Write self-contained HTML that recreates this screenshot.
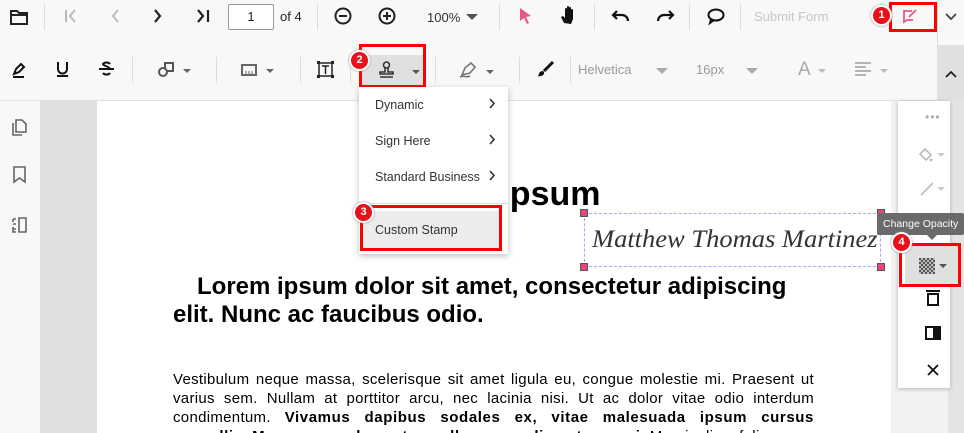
<!DOCTYPE html>
<html><head><meta charset="utf-8"><style>
*{box-sizing:border-box;margin:0;padding:0}
html,body{width:964px;height:433px;overflow:hidden}
body{position:relative;background:#f8f8f8;font-family:"Liberation Sans",sans-serif}
.a{position:absolute}
.sep{position:absolute;width:1px;background:#dcdcdc}
svg{position:absolute;overflow:visible}
.badge{position:absolute;width:21px;height:21px;border-radius:50%;background:#e8101a;border:2px solid #fff;box-shadow:0 0 2px #888;color:#fff;font:bold 11px "Liberation Sans",sans-serif;text-align:center;line-height:17px}
.red{position:absolute;border:3px solid #f00}
.mi{position:absolute;left:375px;font:12.5px "Liberation Sans",sans-serif;color:#333}
</style></head><body>
<!-- toolbar row1 -->
<svg style="left:10px;top:9px" width="18" height="16"><path d="M1 2h6l2 2h8v11H1z" fill="none" stroke="#222" stroke-width="2"/><path d="M1 6h16" stroke="#222" stroke-width="2"/></svg>
<div class="sep" style="left:44px;top:4px;height:26px"></div>
<svg style="left:64px;top:9px" width="14" height="14"><path d="M2 1v12M11 1L6 7l5 6" fill="none" stroke="#bbb" stroke-width="2"/></svg>
<svg style="left:110px;top:9px" width="10" height="14"><path d="M8 1L3 7l5 6" fill="none" stroke="#bbb" stroke-width="2"/></svg>
<svg style="left:153px;top:9px" width="10" height="14"><path d="M2 1l5 6-5 6" fill="none" stroke="#222" stroke-width="2.2"/></svg>
<svg style="left:196px;top:9px" width="14" height="14"><path d="M2 1l5 6-5 6M12 1v12" fill="none" stroke="#222" stroke-width="2.2"/></svg>
<div class="a" style="left:228px;top:4px;width:46px;height:26px;border:1px solid #999;border-radius:2px;background:#fff;font-size:13px;text-align:center;line-height:24px;color:#222">1</div>
<div class="a" style="left:280px;top:9px;font-size:13px;color:#222">of 4</div>
<div class="sep" style="left:317px;top:4px;height:26px"></div>
<svg style="left:334px;top:7px" width="18" height="18"><circle cx="9" cy="9" r="7.5" fill="none" stroke="#222" stroke-width="2"/><path d="M5 9h8" stroke="#222" stroke-width="2"/></svg>
<svg style="left:378px;top:7px" width="18" height="18"><circle cx="9" cy="9" r="7.5" fill="none" stroke="#222" stroke-width="2"/><path d="M5 9h8M9 5v8" stroke="#222" stroke-width="2"/></svg>
<div class="a" style="left:427px;top:10px;font-size:13px;color:#333">100%</div>
<svg style="left:466px;top:14px" width="12" height="7"><path d="M0 0h12L6 6z" fill="#555"/></svg>
<div class="sep" style="left:499px;top:4px;height:26px"></div>
<svg style="left:519px;top:7px" width="14" height="18"><path d="M1 1l11 8-5 1 3 6-2 1-3-6-4 3z" fill="#e9578a"/></svg>
<svg style="left:561px;top:6px" width="16" height="19"><path d="M3 17l-3-6 2-1 2 2V3a1 1 0 012 0v6V1a1 1 0 012 0v8V2a1 1 0 012 0v7V4a1 1 0 012 0v9l-2 5z" fill="#111"/></svg>
<div class="sep" style="left:594px;top:4px;height:26px"></div>
<svg style="left:612px;top:10px" width="18" height="12"><path d="M5 1L1 5l4 4M1 5h9a6 6 0 016 6" fill="none" stroke="#111" stroke-width="2.2"/></svg>
<svg style="left:656px;top:10px" width="18" height="12"><path d="M13 1l4 4-4 4M17 5H8a6 6 0 00-6 6" fill="none" stroke="#111" stroke-width="2.2"/></svg>
<div class="sep" style="left:689px;top:4px;height:26px"></div>
<svg style="left:707px;top:8px" width="18" height="16"><ellipse cx="9" cy="7" rx="7.5" ry="5.5" fill="none" stroke="#111" stroke-width="2"/><path d="M4 11l-1 4 4-3" fill="none" stroke="#111" stroke-width="2"/></svg>
<div class="sep" style="left:740px;top:4px;height:26px"></div>
<div class="a" style="left:754px;top:9px;font-size:13px;color:#c6c6c6">Submit Form</div>
<div class="red" style="left:889px;top:2px;width:48px;height:30px"></div>
<div class="badge" style="left:871px;top:5px">1</div>
<svg style="left:903px;top:9px" width="15" height="14"><path d="M9 2H1v11l3-2h6M6 8l7-7" fill="none" stroke="#e9578a" stroke-width="1.8"/></svg>
<div class="sep" style="left:937px;top:0;height:45px"></div>
<svg style="left:945px;top:13px" width="12" height="8"><path d="M1 1l5 5 5-5" fill="none" stroke="#444" stroke-width="1.8"/></svg>
<!-- toolbar row2 -->
<svg style="left:11px;top:62px" width="14" height="16"><path d="M2 15h11M3 12l2-5 5-5 3 3-5 5z" fill="none" stroke="#111" stroke-width="2"/></svg>
<svg style="left:56px;top:61px" width="13" height="16"><path d="M2 1v7a4.5 4.5 0 009 0V1M1 15h11" fill="none" stroke="#111" stroke-width="2"/></svg>
<svg style="left:99px;top:61px" width="15" height="16"><path d="M11 3a4 3 0 00-7 0c0 2 6 2 7 5M4 12a4 3 0 007 0M0 8h15" fill="none" stroke="#111" stroke-width="2"/></svg>
<div class="sep" style="left:132px;top:57px;height:26px"></div>
<svg style="left:158px;top:62px" width="16" height="16"><circle cx="5" cy="10" r="4" fill="none" stroke="#555" stroke-width="2"/><path d="M7 7V1h8v8H9" fill="none" stroke="#555" stroke-width="2"/></svg>
<svg style="left:183px;top:69px" width="8" height="5"><path d="M0 0h8L4 4z" fill="#666"/></svg>
<div class="sep" style="left:216px;top:57px;height:26px"></div>
<svg style="left:241px;top:64px" width="16" height="12"><rect x="1" y="1" width="14" height="10" fill="none" stroke="#666" stroke-width="2"/><path d="M5 7v3M8 7v3M11 7v3" stroke="#666"/></svg>
<svg style="left:266px;top:69px" width="8" height="5"><path d="M0 0h8L4 4z" fill="#666"/></svg>
<div class="sep" style="left:300px;top:57px;height:26px"></div>
<svg style="left:317px;top:61px" width="17" height="17"><rect x="2" y="2" width="13" height="13" fill="none" stroke="#222" stroke-width="1.5"/><path d="M5 5h7M8.5 5v8" stroke="#222" stroke-width="1.5"/><rect x="0" y="0" width="3" height="3" fill="#222"/><rect x="14" y="0" width="3" height="3" fill="#222"/><rect x="0" y="14" width="3" height="3" fill="#222"/><rect x="14" y="14" width="3" height="3" fill="#222"/></svg>
<div class="sep" style="left:350px;top:57px;height:26px"></div>
<div class="a" style="left:362px;top:55px;width:62px;height:32px;background:#e0e0e0"></div>
<svg style="left:378px;top:61px" width="17" height="17"><circle cx="8.5" cy="4" r="3" fill="none" stroke="#333" stroke-width="1.6"/><path d="M7 7v4H2v2h13v-2h-5V7M2 16h13" fill="none" stroke="#333" stroke-width="1.6"/></svg>
<svg style="left:412px;top:70px" width="8" height="5"><path d="M0 0h8L4 4z" fill="#555"/></svg>
<div class="red" style="left:359px;top:44px;width:67px;height:44px"></div>
<div class="badge" style="left:349px;top:50px">2</div>
<div class="sep" style="left:435px;top:57px;height:26px"></div>
<svg style="left:460px;top:62px" width="18" height="16"><path d="M2 13l3-7 6-5 4 4-5 6z M0 15c4-2 6 1 10-1" fill="none" stroke="#777" stroke-width="1.6"/></svg>
<svg style="left:486px;top:70px" width="8" height="5"><path d="M0 0h8L4 4z" fill="#666"/></svg>
<div class="sep" style="left:519px;top:57px;height:26px"></div>
<svg style="left:537px;top:61px" width="17" height="16"><path d="M16 1L7 10" stroke="#111" stroke-width="3"/><path d="M6 10c-3 0-4 2-4 3s-1 2-2 2c4 1 8-1 7-4z" fill="#111"/></svg>
<div class="sep" style="left:570px;top:57px;height:26px"></div>
<div class="a" style="left:578px;top:62px;font-size:13px;color:#9a9a9a">Helvetica</div>
<svg style="left:656px;top:68px" width="12" height="6"><path d="M0 0h12L6 6z" fill="#aaa"/></svg>
<div class="a" style="left:696px;top:62px;font-size:13px;color:#9a9a9a">16px</div>
<svg style="left:746px;top:68px" width="12" height="6"><path d="M0 0h12L6 6z" fill="#aaa"/></svg>
<div class="a" style="left:798px;top:59px;font-size:19px;color:#aaa">A</div>
<svg style="left:818px;top:69px" width="8" height="5"><path d="M0 0h8L4 4z" fill="#bbb"/></svg>
<svg style="left:855px;top:62px" width="16" height="14"><path d="M0 1h16M0 5h11M0 9h16M0 13h11" stroke="#aaa" stroke-width="1.8"/></svg>
<svg style="left:880px;top:69px" width="8" height="5"><path d="M0 0h8L4 4z" fill="#bbb"/></svg>
<div class="a" style="left:937px;top:45px;width:27px;height:56px;background:#e0e0e0"></div>
<svg style="left:945px;top:70px" width="12" height="8"><path d="M1 7l5-5 5 5" fill="none" stroke="#222" stroke-width="1.8"/></svg>
<div class="a" style="left:0;top:100px;width:964px;height:1px;background:#e0e0e0"></div>
<!-- left panel -->
<svg style="left:12px;top:119px" width="15" height="17"><path d="M4 1h6l4 4v8H4zM1 4v12h9" fill="none" stroke="#666" stroke-width="1.6"/></svg>
<svg style="left:13px;top:166px" width="13" height="17"><path d="M1 1h11v15l-5.5-4L1 16z" fill="none" stroke="#666" stroke-width="1.6"/></svg>
<svg style="left:12px;top:217px" width="15" height="16"><path d="M7 1h7v14H7zM1 2h3M1 7h3M1 12h3M1 2v3M1 10v5h3" fill="none" stroke="#666" stroke-width="1.6"/></svg>
<!-- viewer area -->
<div class="a" style="left:40px;top:101px;width:858px;height:332px;background:#e0e0e0"></div>
<div class="a" style="left:97px;top:101px;width:794px;height:332px;background:#fff;overflow:hidden">
<div class="a" style="left:290px;top:74px;font:bold 34px 'Liberation Sans',sans-serif;color:#000;white-space:nowrap">Lorem ipsum</div>
<div class="a" style="left:76px;top:172px;width:650px;font:bold 24px 'Liberation Sans',sans-serif;color:#000;line-height:28px;text-indent:24px">Lorem ipsum dolor sit amet, consectetur adipiscing elit. Nunc ac faucibus odio.</div>
<div class="a" style="left:76px;top:269px;width:641px;font:15px 'Liberation Sans',sans-serif;color:#000;line-height:19px;text-align:justify;letter-spacing:0.3px">Vestibulum neque massa, scelerisque sit amet ligula eu, congue molestie mi. Praesent ut varius sem. Nullam at porttitor arcu, nec lacinia nisi. Ut ac dolor vitae odio interdum condimentum. <b style="letter-spacing:0.6px">Vivamus dapibus sodales ex, vitae malesuada ipsum cursus convallis. Maecenas sed egestas nulla, ac condimentum orci.</b> Mauris diam felis.</div>
</div>
<!-- signature -->
<div class="a" style="left:584px;top:213px;width:297px;height:54px;border:1px dashed #a8a8ee"></div>
<div class="a" style="left:592px;top:226px;font:italic 25px 'Liberation Serif',serif;color:#333;white-space:nowrap;transform:scaleX(1.06);transform-origin:left">Matthew Thomas Martinez</div>
<div class="a" style="left:580px;top:209px;width:8px;height:8px;background:#e9457a;border:1px solid #555"></div>
<div class="a" style="left:877px;top:209px;width:8px;height:8px;background:#e9457a;border:1px solid #555"></div>
<div class="a" style="left:580px;top:263px;width:8px;height:8px;background:#e9457a;border:1px solid #555"></div>
<div class="a" style="left:877px;top:263px;width:8px;height:8px;background:#e9457a;border:1px solid #555"></div>
<!-- right panel -->
<div class="a" style="left:891px;top:101px;width:73px;height:332px;background:#f2f2f2"></div>
<div class="a" style="left:948px;top:101px;width:16px;height:332px;background:#e4e4e4"></div>
<div class="a" style="left:898px;top:101px;width:52px;height:287px;background:#fff;box-shadow:0 1px 4px rgba(0,0,0,.25)"></div>
<div class="a" style="left:925px;top:110px;font-size:12px;color:#aaa;letter-spacing:1px">•••</div>
<svg style="left:919px;top:148px" width="26" height="14"><path d="M6 1l6 6-5 5-6-6z" fill="none" stroke="#bbb" stroke-width="1.6"/><circle cx="12" cy="12" r="1.5" fill="#bbb"/><path d="M18 5h8l-4 4z" fill="#ccc"/></svg>
<svg style="left:920px;top:182px" width="25" height="14"><path d="M1 13L13 1" stroke="#bbb" stroke-width="1.6"/><path d="M17 5h8l-4 4z" fill="#ccc"/></svg>
<div class="a" style="left:877px;top:213px;width:87px;height:22px;background:#6a6a6a;border-radius:2px;color:#fff;font-size:10.5px;line-height:22px;padding-left:6px;white-space:nowrap;overflow:hidden">Change Opacity</div>
<svg style="left:926px;top:234px" width="12" height="6"><path d="M0 0h12L6 6z" fill="#6a6a6a"/></svg>
<div class="a" style="left:905px;top:246px;width:53px;height:40px;background:#e0e0e0"></div>
<svg style="left:919px;top:258px" width="16" height="16"><pattern id="p" width="4" height="4" patternUnits="userSpaceOnUse"><rect width="2" height="2" fill="#555"/><rect x="2" y="2" width="2" height="2" fill="#555"/><rect x="2" width="2" height="2" fill="#bbb"/><rect y="2" width="2" height="2" fill="#bbb"/></pattern><rect width="16" height="16" fill="url(#p)"/></svg>
<svg style="left:939px;top:264px" width="8" height="5"><path d="M0 0h8L4 4z" fill="#555"/></svg>
<div class="red" style="left:899px;top:243px;width:62px;height:44px"></div>
<div class="badge" style="left:891px;top:232px">4</div>
<svg style="left:926px;top:290px" width="14" height="16"><path d="M0 1h14M2 4h10v11H2z" fill="none" stroke="#111" stroke-width="2"/></svg>
<svg style="left:925px;top:326px" width="16" height="14"><rect x="1" y="1" width="14" height="12" fill="none" stroke="#111" stroke-width="2"/><rect x="8" y="1" width="7" height="12" fill="#111"/></svg>
<svg style="left:927px;top:364px" width="12" height="12"><path d="M1 1l10 10M11 1L1 11" stroke="#111" stroke-width="1.8"/></svg>
<!-- dropdown menu -->
<div class="a" style="left:359px;top:87px;width:149px;height:167px;background:#fff;box-shadow:0 2px 6px rgba(0,0,0,.25)"></div>
<div class="mi" style="top:98px">Dynamic</div>
<svg style="left:489px;top:98px" width="6" height="11"><path d="M1 1l4 4.5L1 10" fill="none" stroke="#333" stroke-width="1.6"/></svg>
<div class="mi" style="top:134px">Sign Here</div>
<svg style="left:489px;top:134px" width="6" height="11"><path d="M1 1l4 4.5L1 10" fill="none" stroke="#333" stroke-width="1.6"/></svg>
<div class="mi" style="top:170px">Standard Business</div>
<svg style="left:489px;top:170px" width="6" height="11"><path d="M1 1l4 4.5L1 10" fill="none" stroke="#333" stroke-width="1.6"/></svg>
<div class="a" style="left:359px;top:203px;width:149px;height:1px;background:#ddd"></div>
<div class="a" style="left:361px;top:211px;width:140px;height:38px;background:#ececec"></div>
<div class="mi" style="top:223px">Custom Stamp</div>
<div class="red" style="left:360px;top:205px;width:142px;height:46px"></div>
<div class="badge" style="left:353px;top:202px">3</div>
</body></html>
